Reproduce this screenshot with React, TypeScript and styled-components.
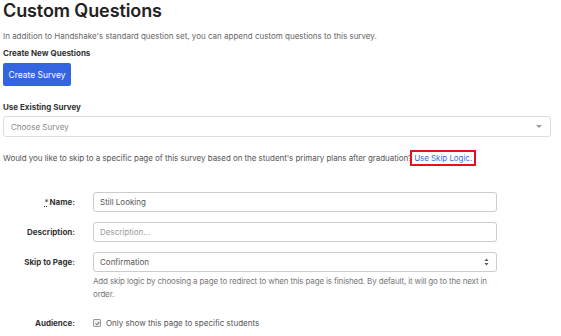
import React from "react";
import styled, { createGlobalStyle } from "styled-components";

const Global = createGlobalStyle`
  html, body { margin: 0; padding: 0; background: #fff; }
  body { font-family: Inter, "Noto Sans", sans-serif; color: #555; }
`;

const Page = styled.div`
  padding: 0 10px 0 3px;
  width: 548px;
  display: flex;
  flex-direction: column;
`;

const Title = styled.h1`
  margin: 0;
  font-size: 18px;
  line-height: 22px;
  font-weight: 600;
  color: #222;
  letter-spacing: -0.1px;
`;

const Lead = styled.p`
  margin: 8px 0 0;
  font-size: 8px;
  line-height: 12px;
  color: #666;
`;

const SectionLabel = styled.div<{ $gap: number }>`
  margin-top: ${(p) => p.$gap}px;
  font-size: 8px;
  line-height: 12px;
  font-weight: 700;
  color: #333;
`;

const PrimaryButton = styled.button`
  margin-top: 4px;
  align-self: flex-start;
  width: 68px;
  height: 23px;
  border: none;
  border-radius: 2px;
  background: #3465e0;
  color: #fff;
  font-family: inherit;
  font-size: 8.5px;
  padding: 0;
`;

const SelectBox = styled.div`
  margin-top: 3px;
  height: 21px;
  box-sizing: border-box;
  border: 1px solid #ddd;
  border-radius: 3px;
  display: flex;
  align-items: center;
  justify-content: space-between;
  padding: 0 8px 0 7px;
  font-size: 8px;
  color: #888;
`;

const Caret = styled.span`
  width: 0;
  height: 0;
  border-left: 3px solid transparent;
  border-right: 3px solid transparent;
  border-top: 3px solid #999;
`;

const Question = styled.p`
  margin: 15px 0 0;
  font-size: 8px;
  line-height: 12px;
  color: #555;
  white-space: nowrap;
  letter-spacing: -0.05px;
`;

const SkipLink = styled.a`
  color: #3a6be8;
  text-decoration: none;
  outline: 2px solid #e8101a;
  outline-offset: 1px;
  margin-left: 1px;
  padding: 0 1px;
`;

const Form = styled.div`
  margin-top: 28px;
  display: grid;
  grid-template-columns: 72px 404px;
  column-gap: 18px;
  row-gap: 10px;
  align-items: start;
`;

const Label = styled.label`
  text-align: right;
  font-size: 8px;
  font-weight: 700;
  color: #333;
  line-height: 20px;
`;

const Req = styled.span`
  text-decoration: underline dotted;
  font-weight: 400;
  margin-right: 1px;
`;

const Field = styled.div`
  display: flex;
  flex-direction: column;
`;

const TextInput = styled.div<{ $placeholder?: boolean }>`
  height: 20px;
  box-sizing: border-box;
  border: 1px solid #ccc;
  border-radius: 3px;
  display: flex;
  align-items: center;
  justify-content: space-between;
  padding: 0 7px 0 6px;
  font-size: 8px;
  color: ${(p) => (p.$placeholder ? "#999" : "#555")};
`;

const Help = styled.div`
  margin-top: 3px;
  margin-right: -4px;
  font-size: 8px;
  line-height: 13px;
  color: #777;
  letter-spacing: -0.15px;
`;

const AudienceLabel = styled(Label)`
  margin-top: 2px;
`;

const CheckRow = styled.div`
  margin-top: 2px;
  display: flex;
  align-items: center;
  gap: 5px;
  height: 20px;
  font-size: 8px;
  color: #555;
`;

const Check = styled.span`
  width: 6px;
  height: 6px;
  border: 1px solid #999;
  background: #eee;
  border-radius: 1px;
  display: flex;
  align-items: center;
  justify-content: center;
`;

const Updown = () => (
  <svg width="5" height="8" viewBox="0 0 5 8">
    <path d="M2.5 0.5 L4.5 3 L0.5 3 Z M2.5 7.5 L4.5 5 L0.5 5 Z" fill="#555" />
  </svg>
);

export default function App() {
  return (
    <>
      <Global />
      <Page>
        <Title>Custom Questions</Title>
        <Lead>
          In addition to Handshake's standard question set, you can append custom questions to this survey.
        </Lead>
        <SectionLabel $gap={5}>Create New Questions</SectionLabel>
        <PrimaryButton>Create Survey</PrimaryButton>
        <SectionLabel $gap={15}>Use Existing Survey</SectionLabel>
        <SelectBox>
          Choose Survey
          <Caret />
        </SelectBox>
        <Question>
          Would you like to skip to a specific page of this survey based on the student's primary plans after
          graduation?<SkipLink href="#">Use Skip Logic.</SkipLink>
        </Question>
        <Form>
          <Label>
            <Req>*</Req>Name:
          </Label>
          <TextInput>Still Looking</TextInput>
          <Label>Description:</Label>
          <TextInput $placeholder>Description...</TextInput>
          <Label>Skip to Page:</Label>
          <Field>
            <TextInput>
              Confirmation
              <Updown />
            </TextInput>
            <Help>
              Add skip logic by choosing a page to redirect to when this page is finished. By default, it will go to the
              next in order.
            </Help>
          </Field>
          <AudienceLabel>Audience:</AudienceLabel>
          <CheckRow>
            <Check>
              <svg width="5" height="5" viewBox="0 0 5 5">
                <path d="M0.8 2.6 L2 3.8 L4.2 1" stroke="#444" strokeWidth="1" fill="none" />
              </svg>
            </Check>
            Only show this page to specific students
          </CheckRow>
        </Form>
      </Page>
    </>
  );
}
